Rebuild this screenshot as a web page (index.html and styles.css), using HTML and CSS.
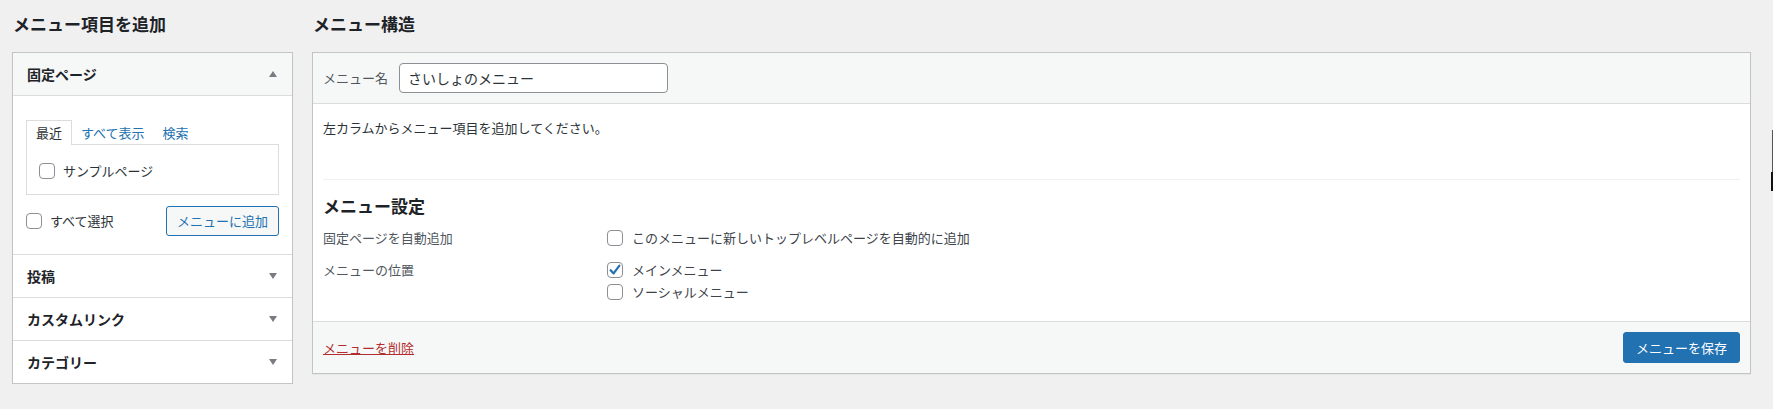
FILE: index.html
```html
<!DOCTYPE html>
<html lang="ja">
<head>
<meta charset="utf-8">
<title>メニュー</title>
<link rel="stylesheet" href="styles.css">
</head>
<body>
<div class="page">
  <div class="col-left">
    <h2 class="col-title">メニュー項目を追加</h2>
    <div class="accordion">
      <div class="acc-section">
        <div class="acc-title open"><h3>固定ページ</h3><span class="arrow up"></span></div>
        <div class="acc-body">
          <ul class="tabs">
            <li class="tab active">最近</li>
            <li class="tab"><a href="#">すべて表示</a></li>
            <li class="tab"><a href="#">検索</a></li>
          </ul>
          <div class="tab-panel">
            <label class="check-row"><span class="cb"></span><span>サンプルページ</span></label>
          </div>
          <div class="button-row">
            <label class="check-row"><span class="cb"></span><span>すべて選択</span></label>
            <button class="btn-secondary">メニューに追加</button>
          </div>
        </div>
      </div>
      <div class="acc-section">
        <div class="acc-title"><h3>投稿</h3><span class="arrow down"></span></div>
      </div>
      <div class="acc-section">
        <div class="acc-title"><h3>カスタムリンク</h3><span class="arrow down"></span></div>
      </div>
      <div class="acc-section">
        <div class="acc-title"><h3>カテゴリー</h3><span class="arrow down"></span></div>
      </div>
    </div>
  </div>
  <div class="col-right">
    <h2 class="col-title">メニュー構造</h2>
    <div class="menu-panel">
      <div class="menu-header">
        <label class="name-label">メニュー名</label>
        <input class="name-input" type="text" value="さいしょのメニュー">
      </div>
      <div class="menu-body">
        <p class="instructions">左カラムからメニュー項目を追加してください。</p>
        <div class="divider"></div>
        <h3 class="settings-title">メニュー設定</h3>
        <div class="settings-grid">
          <div class="setting-name">固定ページを自動追加</div>
          <div class="setting-input">
            <label class="check-item"><span class="cb"></span><span>このメニューに新しいトップレベルページを自動的に追加</span></label>
          </div>
          <div class="setting-name">メニューの位置</div>
          <div class="setting-input">
            <label class="check-item"><span class="cb checked"><svg viewBox="0 0 16 16" width="16" height="16"><path d="M3.6 8.2 L6.6 11.4 L12.4 3.6" fill="none" stroke="#2271b1" stroke-width="2.2" stroke-linecap="round" stroke-linejoin="round"/></svg></span><span>メインメニュー</span></label>
            <label class="check-item"><span class="cb"></span><span>ソーシャルメニュー</span></label>
          </div>
        </div>
      </div>
      <div class="menu-footer">
        <a class="delete-link" href="#">メニューを削除</a>
        <button class="btn-primary">メニューを保存</button>
      </div>
    </div>
  </div>
</div>
<div class="edge-mark"></div>
</body>
</html>
```
FILE: styles.css
```css
html, body {
  margin: 0;
  padding: 0;
}
body {
  background: #f0f0f1;
  font-family: "Noto Sans CJK JP", "Noto Sans", sans-serif;
  font-size: 13px;
  line-height: 20px;
  color: #3c434a;
  overflow: hidden;
}
.page {
  display: flex;
  gap: 19px;
  padding: 13px 22px 0 12px;
  align-items: flex-start;
}
.col-left {
  width: 281px;
  flex: none;
}
.col-right {
  flex: 1;
  min-width: 0;
}
.col-title {
  margin: 0 0 17px 1px;
  font-size: 17px;
  line-height: 22px;
  font-weight: 700;
  color: #1d2327;
}

/* accordion */
.accordion {
  background: #fff;
  border: 1px solid #c3c4c7;
  box-shadow: 0 1px 1px rgba(0, 0, 0, 0.06);
}
.acc-section + .acc-section {
  border-top: 1px solid #dcdcde;
}
.acc-title {
  height: 42px;
  padding: 0 15px 0 14px;
  display: flex;
  align-items: center;
  justify-content: space-between;
}
.acc-title.open {
  background: #f6f7f7;
  border-bottom: 1px solid #dcdcde;
}
.acc-title h3 {
  margin: 0;
  font-size: 14px;
  font-weight: 700;
  line-height: 20px;
  color: #1d2327;
}
.arrow {
  width: 0;
  height: 0;
  border-left: 4px solid transparent;
  border-right: 4px solid transparent;
}
.arrow.up {
  border-bottom: 6px solid #787c82;
}
.arrow.down {
  border-top: 6px solid #787c82;
}
.acc-body {
  padding: 24px 13px 18px;
}
.tabs {
  display: flex;
  list-style: none;
  margin: 0 0 -1px;
  padding: 0;
  position: relative;
}
.tab {
  padding: 0 8px;
  line-height: 24px;
  border: 1px solid transparent;
  border-bottom: none;
  color: #2c3338;
}
.tab.active {
  padding: 0 9px;
  border-color: #dcdcde;
  background: #fff;
}
.tab a {
  color: #2271b1;
  text-decoration: none;
}
.tab-panel {
  border: 1px solid #dcdcde;
  padding: 16px 12px 13px;
}
.check-row {
  display: flex;
  align-items: center;
  gap: 8px;
  height: 20px;
  color: #2c3338;
}
.cb {
  width: 16px;
  height: 16px;
  box-sizing: border-box;
  border: 1px solid #8c8f94;
  border-radius: 4px;
  background: #fff;
  flex: none;
  display: flex;
  align-items: center;
  justify-content: center;
}
.cb svg {
  display: block;
  margin: -1px;
}
.button-row {
  margin-top: 11px;
  display: flex;
  align-items: center;
  justify-content: space-between;
}
.btn-secondary {
  height: 30px;
  padding: 0 10px;
  border: 1px solid #2271b1;
  border-radius: 3px;
  background: #f6f7f7;
  color: #2271b1;
  font-family: inherit;
  font-size: 13px;
  line-height: 28px;
}

/* menu panel */
.menu-panel {
  background: #fff;
  border: 1px solid #c3c4c7;
  box-shadow: 0 1px 1px rgba(0, 0, 0, 0.04);
}
.menu-header {
  background: #f6f7f7;
  border-bottom: 1px solid #dcdcde;
  padding: 10px;
  display: flex;
  align-items: center;
}
.name-label {
  color: #50575e;
  margin-right: 11px;
}
.name-input {
  width: 269px;
  height: 30px;
  box-sizing: border-box;
  border: 1px solid #8c8f94;
  border-radius: 4px;
  padding: 0 8px;
  font-family: inherit;
  font-size: 14px;
  color: #2c3338;
  background: #fff;
  margin: 0;
}
.menu-body {
  padding: 0 10px 18px;
}
.instructions {
  margin: 14px 0 0;
  color: #2c3338;
}
.divider {
  margin-top: 41px;
  border-top: 1px solid #f0f0f1;
}
.settings-title {
  margin: 15px 0 10px;
  font-size: 17px;
  line-height: 22px;
  font-weight: 700;
  color: #1d2327;
}
.settings-grid {
  display: grid;
  grid-template-columns: 284px 1fr;
  row-gap: 10px;
}
.setting-name {
  line-height: 22px;
  color: #50575e;
}
.check-item {
  display: flex;
  align-items: center;
  gap: 9px;
  height: 22px;
  color: #3c434a;
}
.menu-footer {
  background: #f6f7f7;
  border-top: 1px solid #dcdcde;
  padding: 10px;
  display: flex;
  align-items: center;
  justify-content: space-between;
}
.delete-link {
  color: #b32d2e;
  text-decoration: underline;
}
.btn-primary {
  height: 31px;
  padding: 0 12px;
  border: 1px solid #2271b1;
  border-radius: 3px;
  background: #2271b1;
  color: #fff;
  font-family: inherit;
  font-size: 13px;
  line-height: 29px;
}

.edge-mark {
  position: fixed;
  right: 0;
  top: 130px;
  width: 1px;
  height: 42px;
  background: #555;
}
.edge-mark::after {
  content: "";
  position: absolute;
  right: 0;
  top: 42px;
  width: 2px;
  height: 19px;
  background: #111;
}
```
